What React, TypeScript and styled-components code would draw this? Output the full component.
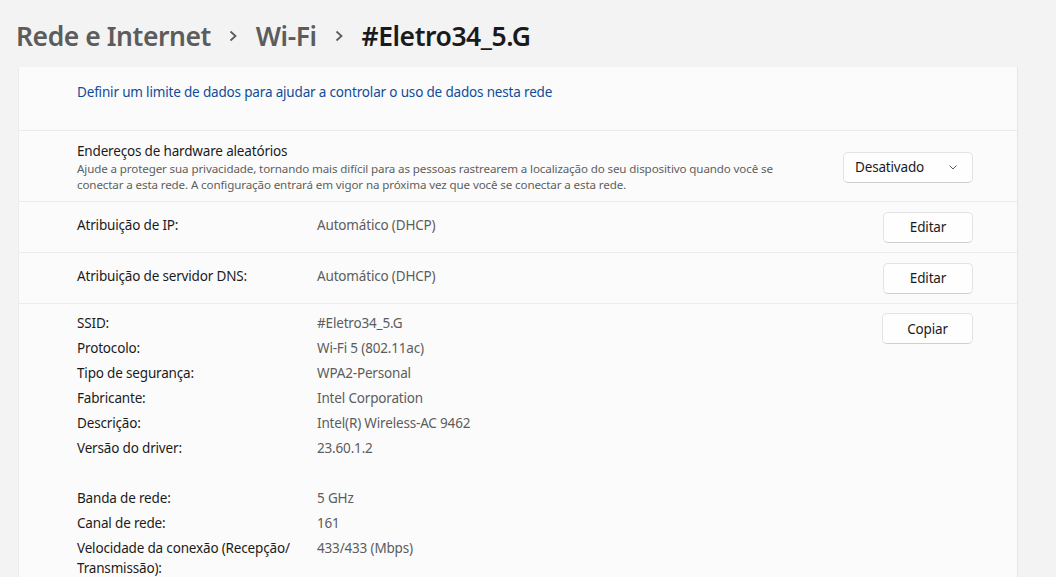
import React from "react";
import styled, { createGlobalStyle } from "styled-components";

const GlobalStyle = createGlobalStyle`
  html, body {
    margin: 0;
    padding: 0;
    background: #f3f3f3;
    font-family: "Noto Sans", "Open Sans", sans-serif;
    color: #1b1b1b;
    overflow: hidden;
  }
`;

const Page = styled.div`
  width: 1056px;
  height: 577px;
  overflow: hidden;
  padding: 0 38px 0 18px;
  box-sizing: border-box;
`;

const Breadcrumb = styled.div`
  display: flex;
  align-items: center;
  height: 67px;
  padding-top: 4px;
  box-sizing: border-box;
  margin-left: -2px;
  font-size: 26.5px;
  font-weight: 600;
  letter-spacing: -0.45px;
`;

const Crumb = styled.span<{ current?: boolean }>`
  color: ${(p) => (p.current ? "#1a1a1a" : "#5c5c5c")};
`;

const Chevron = styled.span`
  display: inline-flex;
  width: 45px;
  justify-content: center;
  color: #5c5c5c;
`;

const Card = styled.div`
  background: #fbfbfb;
  border-left: 1px solid #ececec;
  border-right: 1px solid #e5e5e5;
  font-size: 13.5px;
  letter-spacing: -0.17px;
`;

const Section = styled.div`
  border-bottom: 1px solid #ebebeb;
  padding: 0 44px 0 58px;
  display: flex;
  align-items: center;
`;

const LinkSection = styled(Section)`
  height: 64px;
  align-items: flex-start;
  padding-top: 16px;
  box-sizing: border-box;
`;

const Link = styled.span`
  color: #0f4c9c;
`;

const SettingText = styled.div`
  flex: 1;
  padding: 10px 0 9px;
`;

const SettingTitle = styled.div`
  line-height: 20px;
`;

const SettingDesc = styled.div`
  font-size: 11.6px;
  line-height: 15.5px;
  letter-spacing: -0.12px;
  color: #5f5f5f;
  max-width: 735px;
`;

const Dropdown = styled.div`
  display: flex;
  align-items: center;
  justify-content: space-between;
  width: 130px;
  height: 31px;
  box-sizing: border-box;
  padding: 0 14px 0 11px;
  margin-top: 2px;
  background: #fefefe;
  border: 1px solid #e3e3e3;
  border-bottom-color: #cfcfcf;
  border-radius: 5px;
  margin-left: 30px;
`;

const Button = styled.div<{ w?: number }>`
  width: ${(p) => p.w || 90}px;
  height: 31px;
  box-sizing: border-box;
  display: flex;
  align-items: center;
  justify-content: center;
  background: #fefefe;
  border: 1px solid #e3e3e3;
  border-bottom-color: #cfcfcf;
  border-radius: 5px;
  color: #1b1b1b;
`;

const Row = styled(Section)`
  height: 51px;
  box-sizing: border-box;
`;

const RowText = styled.div`
  flex: 1;
  display: flex;
  padding-bottom: 5px;
`;

const Label = styled.div`
  width: 240px;
`;

const Value = styled.div`
  color: #5d5d5d;
`;

const Props = styled(Section)`
  align-items: flex-start;
  padding-top: 9px;
`;

const PropGrid = styled.div`
  flex: 1;
  display: grid;
  grid-template-columns: 240px 1fr;
  row-gap: 5px;
  line-height: 20px;
`;

const PropLabel = styled.div`
  padding-right: 10px;
`;

const PropValue = styled.div`
  color: #5d5d5d;
`;

const Spacer = styled.div`
  grid-column: 1 / span 2;
  height: 20px;
`;

const props1 = [
  ["SSID:", "#Eletro34_5.G"],
  ["Protocolo:", "Wi-Fi 5 (802.11ac)"],
  ["Tipo de segurança:", "WPA2-Personal"],
  ["Fabricante:", "Intel Corporation"],
  ["Descrição:", "Intel(R) Wireless-AC 9462"],
  ["Versão do driver:", "23.60.1.2"],
];

const props2 = [
  ["Banda de rede:", "5 GHz"],
  ["Canal de rede:", "161"],
  ["Velocidade da conexão (Recepção/ Transmissão):", "433/433 (Mbps)"],
];

const ChevronDown = () => (
  <svg width="10" height="10" viewBox="0 0 10 10">
    <path d="M1.5 3.5 L5 7 L8.5 3.5" fill="none" stroke="#5f5f5f" strokeWidth="1" />
  </svg>
);

const ChevronRight = () => (
  <svg width="12" height="14" viewBox="0 0 12 14">
    <path d="M3.5 2.5 L8.5 7 L3.5 11.5" fill="none" stroke="#5c5c5c" strokeWidth="1.8" />
  </svg>
);

const App: React.FC = () => {
  return (
    <Page>
      <GlobalStyle />
      <Breadcrumb>
        <Crumb>Rede e Internet</Crumb>
        <Chevron>
          <ChevronRight />
        </Chevron>
        <Crumb>Wi-Fi</Crumb>
        <Chevron>
          <ChevronRight />
        </Chevron>
        <Crumb current>#Eletro34_5.G</Crumb>
      </Breadcrumb>
      <Card>
        <LinkSection>
          <Link>Definir um limite de dados para ajudar a controlar o uso de dados nesta rede</Link>
        </LinkSection>
        <Section>
          <SettingText>
            <SettingTitle>Endereços de hardware aleatórios</SettingTitle>
            <SettingDesc>
              Ajude a proteger sua privacidade, tornando mais difícil para as pessoas rastrearem a
              localização do seu dispositivo quando você se conectar a esta rede. A configuração
              entrará em vigor na próxima vez que você se conectar a esta rede.
            </SettingDesc>
          </SettingText>
          <Dropdown>
            Desativado
            <ChevronDown />
          </Dropdown>
        </Section>
        <Row>
          <RowText>
            <Label>Atribuição de IP:</Label>
            <Value>Automático (DHCP)</Value>
          </RowText>
          <Button>Editar</Button>
        </Row>
        <Row>
          <RowText>
            <Label>Atribuição de servidor DNS:</Label>
            <Value>Automático (DHCP)</Value>
          </RowText>
          <Button>Editar</Button>
        </Row>
        <Props>
          <PropGrid>
            {props1.map(([l, v]) => (
              <React.Fragment key={l}>
                <PropLabel>{l}</PropLabel>
                <PropValue>{v}</PropValue>
              </React.Fragment>
            ))}
            <Spacer />
            {props2.map(([l, v]) => (
              <React.Fragment key={l}>
                <PropLabel>{l}</PropLabel>
                <PropValue>{v}</PropValue>
              </React.Fragment>
            ))}
          </PropGrid>
          <Button w={91}>Copiar</Button>
        </Props>
      </Card>
    </Page>
  );
};

export default App;
